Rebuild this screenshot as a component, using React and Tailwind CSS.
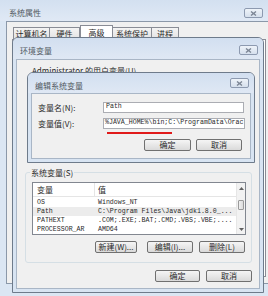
import clsx from 'clsx'

function CloseBtn() {
  return (
    <div className="w-[19px] h-[10px] rounded-[2px] border border-[#8d9ab0] bg-linear-to-b from-[#eef3f9] to-[#d6e0ed] flex items-center justify-center">
      <svg width="7" height="5" viewBox="0 0 7 5">
        <path d="M1 0.5 L6 4.5 M6 0.5 L1 4.5" stroke="#7d8796" strokeWidth="1.4" fill="none" />
      </svg>
    </div>
  )
}

function Btn({ children, className }) {
  return (
    <div
      className={clsx(
        'h-[12px] rounded-[2px] border border-[#707070] bg-linear-to-b from-[#f5f5f5] to-[#dadada] flex items-center justify-center text-[8px] leading-none text-[#2a2a2a]',
        className
      )}
    >
      {children}
    </div>
  )
}

const rows = [
  ['OS', 'Windows_NT'],
  ['Path', 'C:\\Program Files\\Java\\jdk1.8.0_...'],
  ['PATHEXT', '.COM;.EXE;.BAT;.CMD;.VBS;.VBE;....'],
  ['PROCESSOR_AR', 'AMD64'],
]

export default function App() {
  return (
    <div className="relative w-[268px] h-[296px] overflow-hidden bg-white font-['Noto_Sans_CJK_SC',sans-serif] text-[#2a2a2a]">
      {/* 系统属性 */}
      <div className="absolute inset-0 flex flex-col bg-[#dbe6f3]">
        <div className="h-[21px] flex items-start justify-between pl-[9px] pr-[5px] bg-linear-to-b from-[#d3e0f0] to-[#e0e9f5]">
          <span className="pt-[9px] text-[8px] leading-none text-[#505860]">系统属性</span>
          <div className="pt-[8px]">
            <CloseBtn />
          </div>
        </div>
        <div className="flex-1 flex pl-[6px] pb-[12px]">
          <div className="flex-1 flex flex-col bg-[#f0f0f0] border-l border-t border-b border-[#8b98a9] pl-[5px] pr-[2px] pt-[2px]">
            <div className="flex items-end h-[15px] pl-[1px] text-[8px] leading-none">
              <div className="h-[12px] w-[37px] flex items-center justify-center border border-b-0 border-[#898c95] bg-linear-to-b from-[#f4f4f4] to-[#e2e2e2]">计算机名</div>
              <div className="h-[12px] w-[30px] flex items-center justify-center border border-l-0 border-b-0 border-[#898c95] bg-linear-to-b from-[#f4f4f4] to-[#e2e2e2]">硬件</div>
              <div className="h-[15px] w-[33px] flex items-center justify-center border border-b-0 border-[#898c95] bg-white -mb-px relative">高级</div>
              <div className="h-[12px] w-[39px] flex items-center justify-center border border-l-0 border-b-0 border-[#898c95] bg-linear-to-b from-[#f4f4f4] to-[#e2e2e2]">系统保护</div>
              <div className="h-[12px] w-[27px] flex items-center justify-center border border-l-0 border-b-0 border-[#898c95] bg-linear-to-b from-[#f4f4f4] to-[#e2e2e2]">进程</div>
            </div>
            <div className="flex-1 mb-[6px] bg-white border border-[#898c95]" />
          </div>
        </div>
      </div>

      {/* 环境变量 */}
      <div className="absolute left-[12px] top-[37px] w-[252px] h-[256px] rounded-t-[6px] border border-[#6e7b8b] bg-[#d8e4f2] flex flex-col">
        <div className="h-[21px] flex items-start justify-between pl-[7px] pr-[5px] rounded-t-[5px] bg-linear-to-b from-[#d2dff0] to-[#dfe8f4]">
          <span className="pt-[9px] text-[8px] leading-none text-[#505860]">环境变量</span>
          <div className="pt-[7px]">
            <CloseBtn />
          </div>
        </div>
        <div className="flex-1 mx-[3px] mb-[3px] bg-[#f0f0f0] border border-[#a9b6c6] flex flex-col">
          <div className="pl-[15px] pt-[6px] text-[8px] leading-[9px]">Administrator 的用户变量(U)</div>

          <fieldset className="mt-[93px] mx-[8px] mr-[7px] border border-[#d5dfe5] rounded-[3px] pb-[9px] flex flex-col">
            <legend className="ml-[4px] px-[1px] text-[8px] leading-[9px]">系统变量(S)</legend>
            <div className="mt-[5px] mx-[6px] mr-[5px] h-[53px] border border-[#828790] bg-white flex">
              <div className="flex-1 flex flex-col">
                <div className="h-[15px] flex border-b border-[#e5e5e5] text-[8px] leading-none">
                  <div className="w-[62px] pl-[4px] flex items-center border-r border-[#e5e5e5]">变量</div>
                  <div className="pl-[3px] flex items-center">值</div>
                </div>
                <div className="pt-px font-['Liberation_Mono',monospace] text-[6.6px] leading-[9px]">
                  {rows.map(([k, v], i) => (
                    <div key={k} className={clsx('flex whitespace-nowrap', i === 1 && 'bg-[#ececec]')}>
                      <div className="w-[63px] pl-[4px] overflow-hidden">{k}</div>
                      <div className="pl-[2px] overflow-hidden">{v}</div>
                    </div>
                  ))}
                </div>
              </div>
              <div className="w-[9px] bg-[#f2f2f2] border-l border-[#e6e6e6] flex flex-col">
                <div className="h-[10px] flex items-center justify-center">
                  <svg width="5" height="3" viewBox="0 0 5 3"><path d="M0 3 L2.5 0 L5 3 Z" fill="#606060" /></svg>
                </div>
                <div className="mt-[7px] h-[10px] mx-px rounded-[1px] border border-[#9a9a9a] bg-linear-to-r from-[#f0f0f0] to-[#dcdcdc]" />
                <div className="flex-1" />
                <div className="h-[10px] flex items-center justify-center">
                  <svg width="5" height="3" viewBox="0 0 5 3"><path d="M0 0 L2.5 3 L5 0 Z" fill="#606060" /></svg>
                </div>
              </div>
            </div>
            <div className="mt-[6px] pr-[6px] flex justify-end gap-[6px]">
              <Btn className="w-[42px]">新建(W)...</Btn>
              <Btn className="w-[46px] ml-[4px]">编辑(I)...</Btn>
              <Btn className="w-[46px]">删除(L)</Btn>
            </div>
          </fieldset>

          <div className="mt-[7px] pr-[7px] flex justify-end gap-[6px]">
            <Btn className="w-[45px]">确定</Btn>
            <Btn className="w-[46px]">取消</Btn>
          </div>
        </div>
      </div>

      {/* 编辑系统变量 */}
      <div className="absolute left-[27px] top-[72px] w-[228px] h-[91px] rounded-t-[6px] border border-[#6e7b8b] bg-[#d8e4f2] flex flex-col">
        <div className="h-[20px] flex items-start justify-between pl-[7px] pr-[5px] rounded-t-[5px] bg-linear-to-b from-[#d2dff0] to-[#dfe8f4]">
          <span className="pt-[9px] text-[8px] leading-none text-[#505860]">编辑系统变量</span>
          <div className="pt-[5px]">
            <CloseBtn />
          </div>
        </div>
        <div className="flex-1 mx-[3px] mb-[3px] bg-[#f0f0f0] border border-[#a9b6c6] flex flex-col relative">
          <div className="mt-[8px] pl-[6px] flex items-center text-[8px] leading-none">
            <span className="w-[65px]">变量名(N):</span>
            <div className="w-[141px] h-[11px] border border-[#abadb3] bg-white flex items-center pl-[2px] font-['Liberation_Mono',monospace] text-[6.6px]">Path</div>
          </div>
          <div className="mt-[5px] pl-[6px] flex items-center text-[8px] leading-none">
            <span className="w-[65px]">变量值(V):</span>
            <div className="w-[142px] h-[11px] border border-[#abadb3] bg-white flex items-center pl-[1px] overflow-hidden whitespace-nowrap font-['Liberation_Mono',monospace] text-[6.6px]">%JAVA_HOME%\bin;C:\ProgramData\Orac</div>
          </div>
          <div className="absolute left-[75px] top-[38px] w-[65px] h-[2px] bg-[#e01a1a]" />
          <div className="mt-[10px] pr-[8px] flex justify-end gap-[5px]">
            <Btn className="w-[47px]">确定</Btn>
            <Btn className="w-[46px]">取消</Btn>
          </div>
        </div>
      </div>
    </div>
  )
}
